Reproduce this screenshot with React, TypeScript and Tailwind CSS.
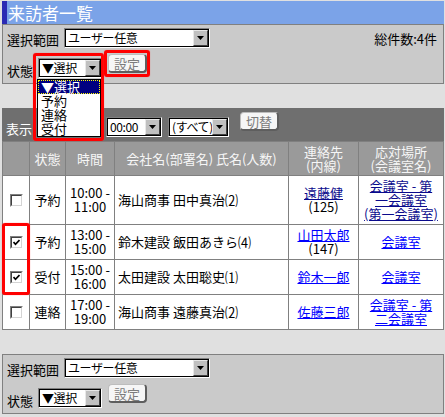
import React from "react";

const rows = [
  {
    checked: false,
    status: "予約",
    time: ["10:00 -", "11:00"],
    name: "海山商事 田中真治⑵",
    contact: "遠藤健",
    ext: "(125)",
    place: ["会議室 - 第", "一会議室", "(第一会議室)"],
    visited: true,
  },
  {
    checked: true,
    status: "予約",
    time: ["13:00 -", "15:00"],
    name: "鈴木建設 飯田あきら⑷",
    contact: "山田太郎",
    ext: "(147)",
    place: ["会議室"],
    visited: false,
  },
  {
    checked: true,
    status: "受付",
    time: ["15:00 -", "16:00"],
    name: "太田建設 太田聡史⑴",
    contact: "鈴木一郎",
    ext: "",
    place: ["会議室"],
    visited: false,
  },
  {
    checked: false,
    status: "連絡",
    time: ["17:00 -", "19:00"],
    name: "海山商事 遠藤真治⑵",
    contact: "佐藤三郎",
    ext: "",
    place: ["会議室 - 第", "二会議室"],
    visited: false,
  },
];

function Select({ className, text }: { className: string; text: string }) {
  return (
    <div
      className={`flex h-[20px] shrink-0 border border-t-[#808080] border-l-[#808080] border-b-white border-r-white ${className}`}
    >
      <div className="flex min-w-0 flex-1 border border-black bg-white">
        <span className="min-w-0 flex-1 whitespace-nowrap pl-[2px] text-[12px] leading-[16px] tracking-[-0.4px] text-black">
          {text}
        </span>
        <span className="relative flex h-[16px] w-[15px] shrink-0 items-center justify-center border border-t-[#e8e8e8] border-l-[#e8e8e8] border-b-[#404040] border-r-[#404040] bg-[#c0c0c0]">
          <svg width="7" height="4" viewBox="0 0 7 4">
            <path d="M0 0H7L3.5 4Z" fill="#000" />
          </svg>
        </span>
      </div>
    </div>
  );
}

function Button({ label, className = "" }: { label: string; className?: string }) {
  return (
    <div
      className={`flex h-[19px] w-[39px] shrink-0 items-center justify-center rounded-[4px] border border-t-[#bdbdbd] border-l-[#bdbdbd] border-b-2 border-r-2 border-b-[#5e5e5e] border-r-[#5e5e5e] bg-[#f6f6f6] text-[13px] leading-none text-[#7c7c7c] ${className}`}
    >
      {label}
    </div>
  );
}

function Checkbox({ checked }: { checked: boolean }) {
  return (
    <span className="flex h-[13px] w-[13px] border border-t-[#808080] border-l-[#808080] border-b-white border-r-white">
      <span className="flex flex-1 items-center justify-center border border-t-[#404040] border-l-[#404040] border-b-[#d4d4d4] border-r-[#d4d4d4] bg-white">
        {checked && (
          <svg width="7" height="7" viewBox="0 0 7 7">
            <polyline points="0.5,3 2.5,5.3 6.5,1" fill="none" stroke="#000" strokeWidth="1.7" />
          </svg>
        )}
      </span>
    </span>
  );
}

function FilterPanel({ showCount }: { showCount: boolean }) {
  return (
    <div className="ml-[2px] flex h-[60px] w-[442px] flex-col border border-[#808080] bg-[#cacaca] pl-[4px] pr-[6px] pt-[3px]">
      <div className="flex items-end">
        <span className="pb-[1px] text-[13px] leading-[14px]">選択範囲</span>
        <Select className="ml-[5px] w-[146px]" text="ユーザー任意" />
        {showCount && (
          <span className="ml-auto pb-[2px] text-[13px] leading-[14px]">総件数:4件</span>
        )}
      </div>
      <div className="mt-[6px] flex items-start">
        <div className="mt-[4px] flex items-end">
          <span className="text-[13px] leading-[14px]">状態</span>
          <Select className="ml-[5px] w-[64px]" text="▼選択" />
        </div>
        <Button label="設定" className="ml-[6px]" />
      </div>
    </div>
  );
}

export default function App() {
  const cell = "flex items-center justify-center bg-white text-center text-[13px] leading-[14px]";
  const head = "flex items-center justify-center bg-[#9a9a9a] text-center text-[13px] leading-[14px] text-[#f6f6f6]";
  return (
    <div className="relative h-[417px] w-[445px] overflow-hidden bg-[#e0e0e0] pt-px font-['Noto_Sans_CJK_JP',sans-serif] text-black">
      {/* title */}
      <div className="ml-[2px] flex h-[23px] w-[442px] items-center border-l-[5px] border-[#2a2ab4] bg-[#7ba3e8] pl-[1px]">
        <span className="text-[17px] leading-[17px] text-white">来訪者一覧</span>
      </div>

      <FilterPanel showCount />

      {/* table */}
      <div className="ml-[2px] mt-[24px] w-[442px]">
        <div className="flex h-[33px] items-end bg-[#6f6f6f] pb-[4px] pl-[4px]">
          <span className="pb-[1px] text-[13px] leading-[14px] text-white">表示</span>
          <Select className="ml-[5px] w-[64px]" text="04/01" />
          <Select className="ml-[5px] w-[56px]" text="00:00" />
          <Select className="ml-[6px] w-[61px]" text="(すべて)" />
          <Button label="切替" className="ml-[11px] mb-[6px]" />
        </div>
        <div className="grid grid-cols-[26px_35px_48px_173px_69px_84px] grid-rows-[33px_48px_34px_34px_34px] gap-px bg-[#808080] p-px">
          <div className={head} />
          <div className={head}>状態</div>
          <div className={head}>時間</div>
          <div className={head}>会社名(部署名) 氏名(人数)</div>
          <div className={head}>
            連絡先
            <br />
            (内線)
          </div>
          <div className={head}>
            応対場所
            <br />
            (会議室名)
          </div>
          {rows.map((r) => {
            const link = r.visited ? "text-[#0a0a8c]" : "text-[#0000ff]";
            return (
              <React.Fragment key={r.name}>
                <div className={cell}>
                  <Checkbox checked={r.checked} />
                </div>
                <div className={cell}>{r.status}</div>
                <div className={`${cell} flex-col`}>
                  <span>{r.time[0]}</span>
                  <span>{r.time[1]}</span>
                </div>
                <div className="flex items-center bg-white pl-[3px] text-[13px] leading-[14px] whitespace-nowrap">
                  {r.name}
                </div>
                <div className={`${cell} flex-col`}>
                  <a className={`${link} underline`}>{r.contact}</a>
                  {r.ext && <span>{r.ext}</span>}
                </div>
                <div className={cell}>
                  <a className={`${link} underline`}>
                    {r.place.map((p, i) => (
                      <React.Fragment key={i}>
                        {i > 0 && <br />}
                        {p}
                      </React.Fragment>
                    ))}
                  </a>
                </div>
              </React.Fragment>
            );
          })}
        </div>
      </div>

      <div className="mt-[24px]">
        <FilterPanel showCount={false} />
      </div>

      {/* open dropdown list */}
      <div className="absolute left-[37px] top-[79px] flex w-[64px] flex-col border border-black bg-white text-[13px] leading-[14px]">
        <span className="border border-dotted border-[#ffff00] bg-[#000080] pl-[2px] leading-[12px] text-white">▼選択</span>
        <span className="pl-[3px]">予約</span>
        <span className="pl-[3px]">連絡</span>
        <span className="pl-[3px]">受付</span>
      </div>

      {/* red annotation boxes */}
      <div className="absolute left-[33px] top-[53px] h-[88px] w-[71px] rounded-[3px] border-[3px] border-[#ff0000] shadow-[0_0_1px_#ff5050]" />
      <div className="absolute left-[104px] top-[50px] h-[27px] w-[46px] rounded-[3px] border-[3px] border-[#ff0000] shadow-[0_0_1px_#ff5050]" />
      <div className="absolute left-[2px] top-[223px] h-[72px] w-[28px] rounded-[3px] border-[3px] border-[#ff0000] shadow-[0_0_1px_#ff5050]" />
    </div>
  );
}
